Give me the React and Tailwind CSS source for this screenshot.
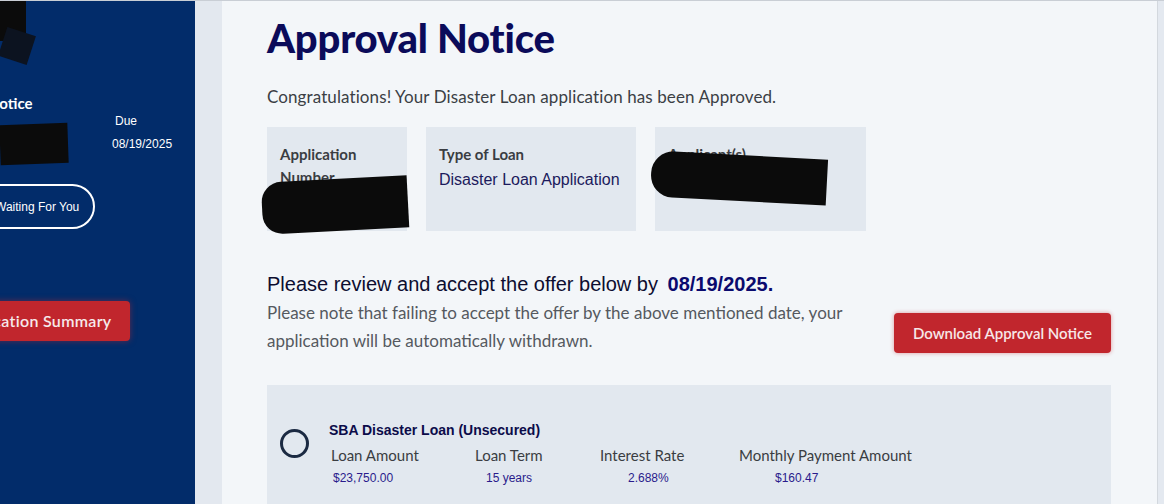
import React from 'react';

const arial = { fontFamily: '"Liberation Sans", Arial, sans-serif' };

function Redact({ className }) {
  // black marker blobs that hide personal data in the screenshot
  return <div className={`absolute bg-[#0b0b0b] ${className}`} />;
}

function Sidebar() {
  return (
    <aside className="relative w-[195px] shrink-0 overflow-hidden bg-[#022c6a] text-white">
      <Redact className="left-0 top-0 h-[40px] w-[26px]" />
      <Redact className="left-[2px] top-[30px] h-[30px] w-[30px] rotate-[18deg] bg-[#0c1320]" />
      <div className="flex flex-col pt-[92px]">
        <p className="-ml-[12px] font-['Lato'] text-[15px] font-bold leading-[20px]">Notice</p>
        <div className="relative mt-[9px] flex h-[44px]">
          <Redact className="left-0 top-[2px] h-[40px] w-[68px] -rotate-[2deg]" />
          <div className="-mt-[8px] ml-[112px] flex flex-col gap-[9px] text-[12px] leading-[14px]" style={arial}>
            <span className="pl-[3px]">Due</span>
            <span>08/19/2025</span>
          </div>
        </div>
        <div className="mt-[18px] flex">
          <span
            className="-ml-[45px] flex h-[45px] items-center rounded-full border-2 border-white pl-[38px] pr-[14px] text-[12px]"
            style={arial}
          >
            Waiting For You
          </span>
        </div>
        <div className="mt-[72px] flex">
          <span className="-ml-[75px] flex h-[40px] items-center rounded-[4px] bg-[#c1262d] pl-[30px] pr-[18px] font-['Lato'] text-[16px] font-semibold tracking-[0.3px] text-[#f6e9ea] shadow-[0_0_6px_rgba(193,38,45,0.5)]">
            Application Summary
          </span>
        </div>
      </div>
    </aside>
  );
}

function InfoCard({ label, width, children }) {
  return (
    <div className={`relative h-[104px] ${width} bg-[#e2e8ef] px-[13px] pt-[16px]`}>
      <p className="font-['Lato'] text-[15px] font-bold leading-[23px] text-[#3a3d42]">{label}</p>
      {children}
    </div>
  );
}

export default function App() {
  const offer = [
    { label: 'Loan Amount', value: '$23,750.00', w: 'w-[144px]', pad: 'pl-[4px]' },
    { label: 'Loan Term', value: '15 years', w: 'w-[125px]', pad: 'pl-[13px]' },
    { label: 'Interest Rate', value: '2.688%', w: 'w-[139px]', pad: 'pl-[30px]' },
    { label: 'Monthly Payment Amount', value: '$160.47', w: 'w-[200px]', pad: 'pl-[38px]' },
  ];

  return (
    <div className="flex h-[504px] w-[1164px] overflow-hidden border-t border-[#c9ced5] bg-[#e4e9f0]">
      <Sidebar />
      <div className="w-[27px] shrink-0 bg-[#e3e8ef]" />
      <main className="w-[936px] shrink-0 border-r border-[#d3d8de] bg-[#f3f6f9] pl-[45px] pr-[46px] pt-[13px]">
        <h1 className="font-['Lato'] text-[40px] font-black leading-[48px] tracking-[-0.2px] text-[#0b0b5a]">
          Approval Notice
        </h1>
        <p className="mt-[23px] font-['Lato'] text-[17px] leading-[24px] tracking-[0.1px] text-[#3b3f45]">
          Congratulations! Your Disaster Loan application has been Approved.
        </p>
        <div className="mt-[18px] flex gap-[19px]">
          <InfoCard label={<>Application<br />Number</>} width="w-[140px]">
            <Redact className="-left-[5px] top-[52px] h-[52px] w-[146px] -rotate-[3deg] rounded-l-[20px]" />
          </InfoCard>
          <InfoCard label="Type of Loan" width="w-[210px]">
            <p className="mt-[4px] text-[16px] leading-[20px] text-[#1b1a5c]" style={arial}>Disaster Loan Application</p>
          </InfoCard>
          <InfoCard label="Applicant(s)" width="w-[211px]">
            <Redact className="-left-[4px] top-[28px] h-[46px] w-[176px] rotate-[3deg] rounded-l-[22px]" />
          </InfoCard>
        </div>

        <div className="mt-[40px] flex items-start justify-between">
          <div>
            <p className="text-[20px] leading-[26px] text-[#0d0d30]" style={arial}>
              Please review and accept the offer below by{' '}
              <span className="ml-[4px] font-bold text-[#0a0a6e]">08/19/2025.</span>
            </p>
            <p className="mt-[2px] w-[590px] font-['Lato'] text-[17px] leading-[28px] text-[#55595f]">
              Please note that failing to accept the offer by the above mentioned date, your application will be automatically withdrawn.
            </p>
          </div>
          <button className="mt-[42px] h-[40px] rounded-[4px] bg-[#c1262d] px-[19px] font-['Lato'] text-[15px] font-semibold text-[#f7e7e8] shadow-[0_0_4px_rgba(193,38,45,0.45)]">
            Download Approval Notice
          </button>
        </div>

        <div className="mt-[30px] flex h-[130px] items-start bg-[#e2e8ef] pl-[13px] pt-[36px]">
          <span className="mt-[8px] h-[29px] w-[29px] shrink-0 rounded-full border-[3px] border-[#1b2a42]" />
          <div className="ml-[20px]">
            <p className="text-[14px] font-bold leading-[18px] text-[#0c0c4a]" style={arial}>
              SBA Disaster Loan (Unsecured)
            </p>
            <div className="mt-[6px] flex">
              {offer.map((o) => (
                <div key={o.label} className={o.w}>
                  <p className="pl-[2px] font-['Lato'] text-[15px] leading-[20px] text-[#3a3d42]">{o.label}</p>
                  <p className={`mt-[5px] ${o.pad} text-[12px] leading-[16px] text-[#2a1b8c]`} style={arial}>
                    {o.value}
                  </p>
                </div>
              ))}
            </div>
          </div>
        </div>
      </main>
      <div className="flex-1 bg-[#e4e9f0]" />
    </div>
  );
}
